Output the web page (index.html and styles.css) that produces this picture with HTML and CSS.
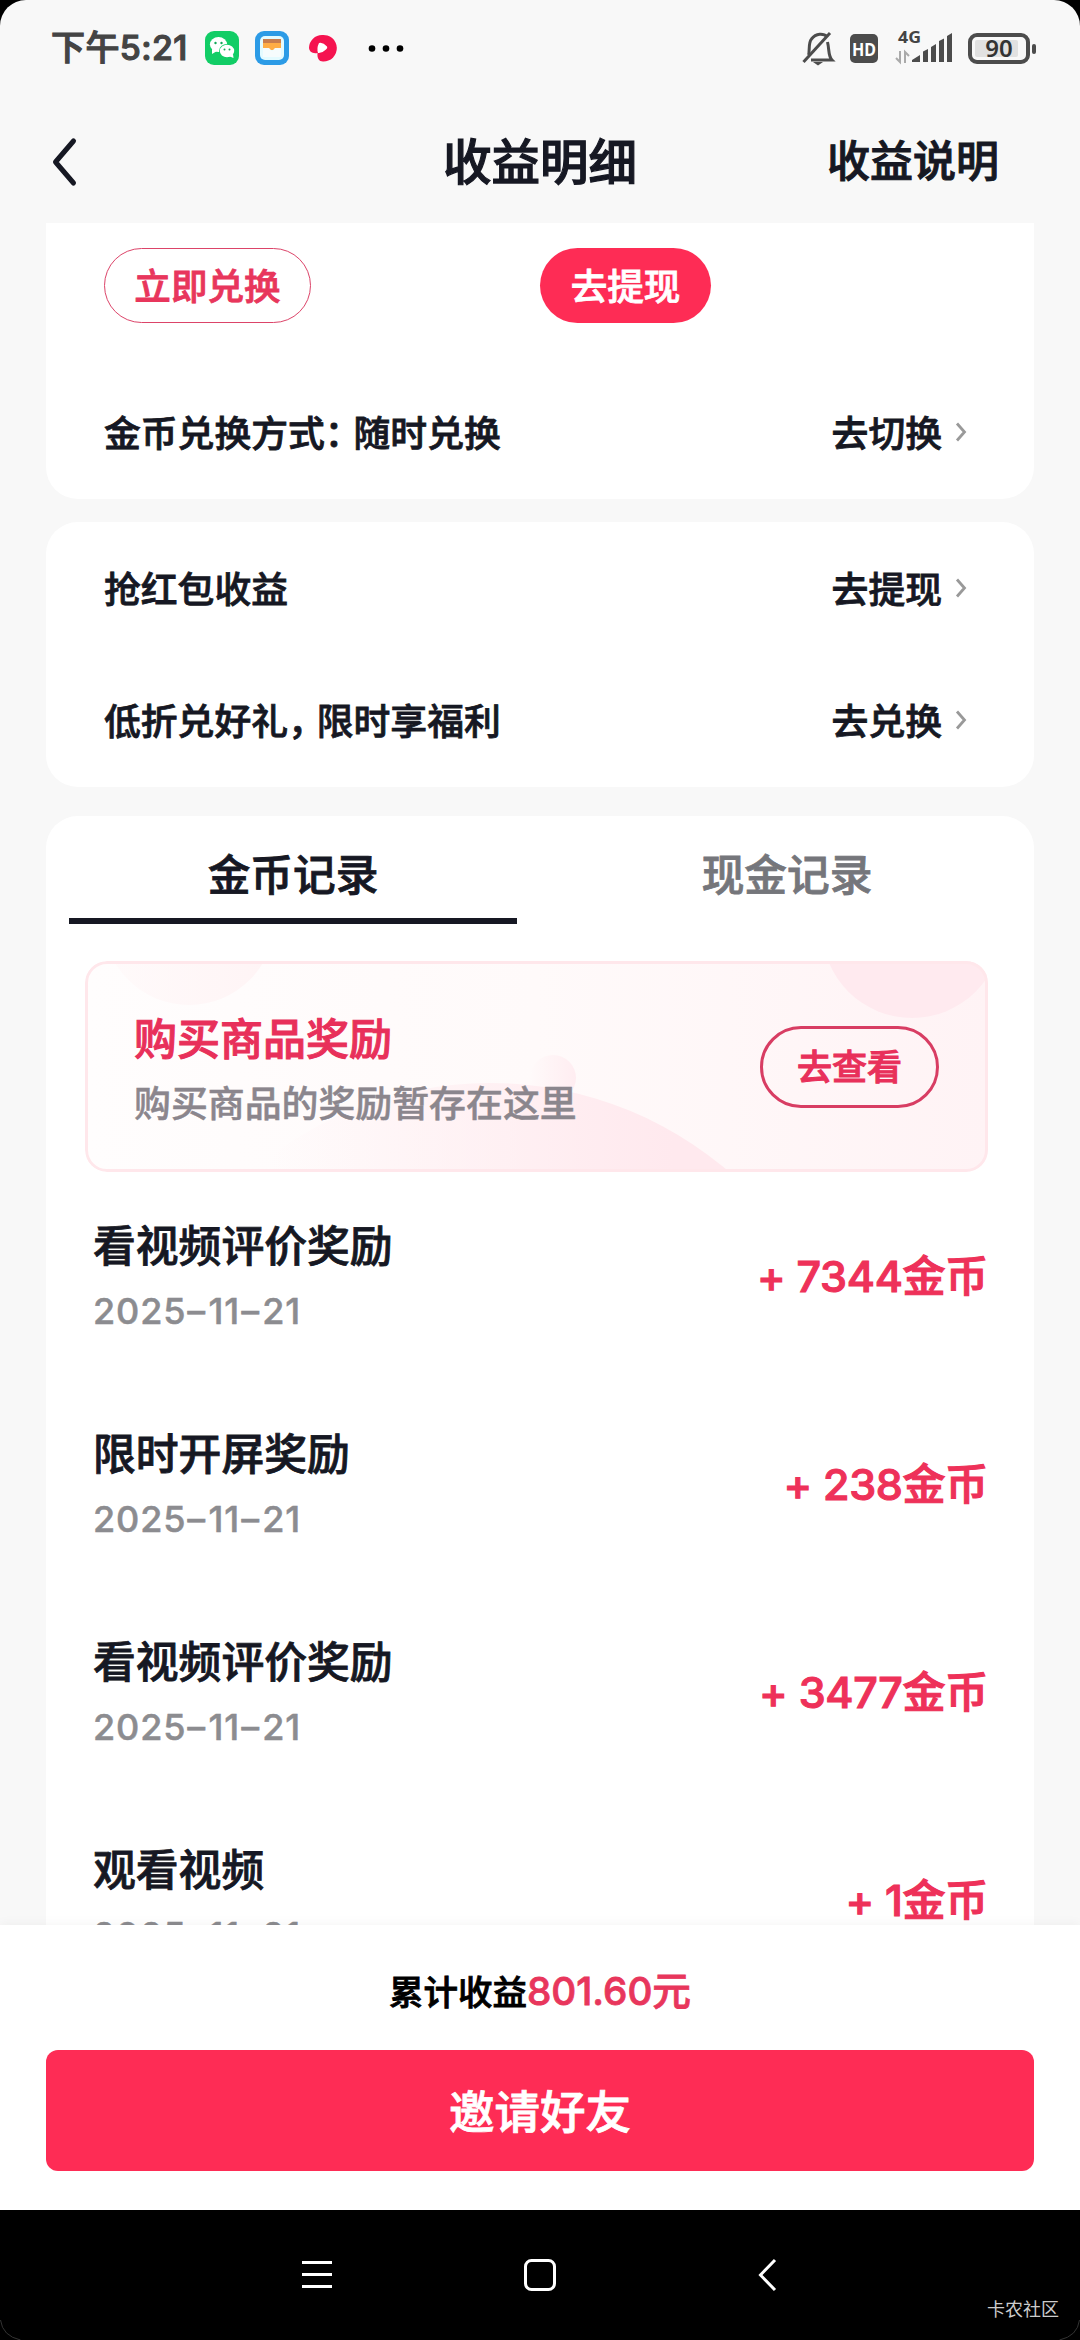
FILE: index.html
```html
<!DOCTYPE html>
<html lang="zh-CN">
<head>
<meta charset="utf-8">
<title>收益明细</title>
<link rel="stylesheet" href="styles.css">
</head>
<body>
<div class="screen">
  <header class="top">
    <div class="status">
      <span class="clock">下午5:21</span>
      <svg class="app-icons" width="216" height="44" viewBox="0 0 216 44">
        <rect x="5" y="5" width="34" height="34" rx="9" fill="#12cd66"/>
        <ellipse cx="18.500" cy="18.500" rx="8.600" ry="7.500" fill="#fff"/>
        <path d="M12 23l0 5 5-3z" fill="#fff"/>
        <ellipse cx="27" cy="25" rx="8" ry="7" fill="#12cd66"/>
        <ellipse cx="27" cy="25" rx="7.200" ry="6.200" fill="#fff"/>
        <path d="M33 28l.5 4-5-2z" fill="#fff"/>
        <g fill="#12a858"><circle cx="15.500" cy="17" r="1.200"/><circle cx="21.500" cy="17" r="1.200"/><circle cx="24.500" cy="23.500" r="1"/><circle cx="29.500" cy="23.500" r="1"/></g>
        <rect x="55" y="5" width="34" height="34" rx="9" fill="#2c9be6"/>
        <rect x="60" y="10" width="24" height="24" rx="5" fill="#e4fbff"/>
        <path d="M63 13h18v5H63z" fill="#c97d4d"/>
        <path d="M63 17h18v7H63z" fill="#ffad45"/>
        <path d="M63 22h6l3 3 3-3h6v9h-18z" fill="#f6fcfd"/>
        <path d="M122 9a13.300 13.300 0 1 1 1 26.500c-4 0-6-3-5.500-8.500-5 1-8.500-1.500-8.500-5.500A13 13 0 0 1 122 9z" fill="#f5134f"/>
        <path d="M119 17q4-1 8 3.500 1 1.500-1 3-4 4-8 3.500-1.500-5 1-10z" fill="#fff"/>
        <circle cx="172" cy="22.500" r="3.300"/><circle cx="186" cy="22.500" r="3.300"/><circle cx="200" cy="22.500" r="3.300"/>
      </svg>
      <svg class="system-icons" width="240" height="44" viewBox="0 0 240 44">
        <g fill="none" stroke="#4c4c4c" stroke-width="3">
          <path d="M7.500 29C9 25 7 17 10.500 13c4.500-6 12-6 16-2"/>
          <path d="M10 34h21C27 30 28.500 24 26.500 16"/>
          <path d="M2.500 36L29 7"/>
        </g>
        <path d="M12 36h10l-5 3.500z" fill="#4c4c4c"/>
        <rect x="49" y="8" width="28" height="29" rx="5" fill="#4c4c4c"/>
        <text x="63" y="29.500" text-anchor="middle" textLength="24" lengthAdjust="spacingAndGlyphs" class="hd">HD</text>
        <text x="97" y="17" class="net" textLength="23" lengthAdjust="spacingAndGlyphs">4G</text>
        <g fill="none" stroke="#aaa" stroke-width="2"><path d="M99 25v11l-4-4M104 37V26l4 4"/></g>
        <path d="M111 36v-2l8-5v7zM122 36V25.500l5-2.500v13zM130 36V21l5-3v18zM138 36V15l5-2.500V36zM146 36V10l5-3v29z" fill="#4c4c4c"/>
        <rect x="169" y="9" width="58" height="27" rx="7" fill="none" stroke="#4c4c4c" stroke-width="4"/>
        <rect x="174" y="14" width="43" height="17" rx="2" fill="#e1e1e1"/>
        <rect x="231" y="18" width="4" height="10" rx="2" fill="#4c4c4c"/>
        <text x="198" y="31" text-anchor="middle" class="battery">90</text>
      </svg>
    </div>
    <nav class="titlebar">
      <svg class="back" width="28" height="52" viewBox="0 0 28 52"><path d="M23.500 5L5.500 26l18 21" fill="none" stroke="#161823" stroke-width="5" stroke-linecap="round" stroke-linejoin="round"/></svg>
      <h1>收益明细</h1>
      <span class="help">收益说明</span>
    </nav>
  </header>

  <main class="content">
    <section class="card card-balance">
      <div class="actions">
        <div class="cell"><span class="pill outline">立即兑换</span></div>
        <div class="cell"><span class="pill solid">去提现</span></div>
      </div>
      <div class="row">
        <span>金币兑换方式<i class="punct">：</i>随时兑换</span>
        <span class="link">去切换<svg width="12" height="20" viewBox="0 0 12 20"><path d="M2 1.500l7.500 8.500L2 18.500"/></svg></span>
      </div>
    </section>

    <section class="card card-links">
      <div class="row">
        <span>抢红包收益</span>
        <span class="link">去提现<svg width="12" height="20" viewBox="0 0 12 20"><path d="M2 1.500l7.500 8.500L2 18.500"/></svg></span>
      </div>
      <div class="row">
        <span>低折兑好礼<i class="punct">，</i>限时享福利</span>
        <span class="link">去兑换<svg width="12" height="20" viewBox="0 0 12 20"><path d="M2 1.500l7.500 8.500L2 18.500"/></svg></span>
      </div>
    </section>

    <section class="card card-records">
      <div class="tabs">
        <div class="tab active">金币记录</div>
        <div class="tab">现金记录</div>
      </div>
      <div class="banner">
        <svg class="banner-art" width="903" height="211" viewBox="0 0 903 211">
          <defs>
            <linearGradient id="hill" x1="0.2" x2="0.75"><stop offset="0" stop-color="#ffe9ee" stop-opacity="0"/><stop offset="1" stop-color="#ffe9ee"/></linearGradient>
            <linearGradient id="dot"><stop offset="0" stop-color="#ffedf1" stop-opacity="0"/><stop offset="1" stop-color="#ffedf1"/></linearGradient>
            <linearGradient id="sun"><stop offset="0" stop-color="#fff5f6" stop-opacity="0.300"/><stop offset="1" stop-color="#fff4f5"/></linearGradient>
          </defs>
          <circle cx="104" cy="-42" r="86" fill="url(#sun)"/>
          <circle cx="827" cy="-33" r="90" fill="#ffeaef"/>
          <circle cx="468" cy="117" r="23" fill="url(#dot)"/>
          <circle cx="405" cy="488" r="366" fill="url(#hill)"/>
        </svg>
        <div class="banner-text">
          <div class="banner-title">购买商品奖励</div>
          <div class="banner-sub">购买商品的奖励暂存在这里</div>
        </div>
        <span class="banner-btn">去查看</span>
      </div>
      <ul class="records">
        <li><div><div class="name">看视频评价奖励</div><div class="date">2025<i>-</i>11<i>-</i>21</div></div><div class="amount">+ 7344金币</div></li>
        <li><div><div class="name">限时开屏奖励</div><div class="date">2025<i>-</i>11<i>-</i>21</div></div><div class="amount">+ 238金币</div></li>
        <li><div><div class="name">看视频评价奖励</div><div class="date">2025<i>-</i>11<i>-</i>21</div></div><div class="amount">+ 3477金币</div></li>
        <li><div><div class="name">观看视频</div><div class="date">2025<i>-</i>11<i>-</i>21</div></div><div class="amount">+ 1金币</div></li>
      </ul>
    </section>
  </main>

  <footer class="footer">
    <div class="total">累计收益<span class="sum">801.60元</span></div>
    <div class="invite">邀请好友</div>
  </footer>

  <div class="sysnav">
    <svg width="1080" height="130" viewBox="0 0 1080 130" fill="none" stroke="#fff" stroke-width="3">
      <path d="M302 52.500h30M302 64.500h30M302 76.500h30"/>
      <rect x="525.500" y="50.500" width="29" height="29" rx="6"/>
      <path d="M775 50L760.500 65 775 80"/>
      <path d="M.5 110q2 16 20 20M1079.500 110q-2 16-20 20" stroke="#333" stroke-width="1"/>
    </svg>
    <span class="mark">卡农社区</span>
  </div>
</div>
</body>
</html>
```
FILE: styles.css
```css
* { box-sizing: border-box; margin: 0; padding: 0; }
body { background: #000; }
.screen {
  width: 1080px;
  height: 2340px;
  overflow: hidden;
  display: flex;
  flex-direction: column;
  background: #f8f8f8;
  border-radius: 26px 26px 0 0;
  font-family: Inter, "Noto Sans CJK SC", sans-serif;
  font-weight: 500;
  -webkit-text-stroke: 0.8px;
  color: #161823;
  white-space: nowrap;
}
i { font-style: normal; }
svg text { -webkit-text-stroke: 0; }
.top { height: 223px; flex: none; }
.status { height: 96px; display: flex; align-items: center; padding-left: 51px; }
.clock { width: 149px; font-size: 34px; line-height: 48px; padding-bottom: 1px; letter-spacing: 0.400px; color: #444; -webkit-text-stroke: 1.200px; }
.system-icons { margin-left: 385px; }
.hd { font: 700 18px "Noto Sans", sans-serif; fill: #fff; }
.net { font: 700 16px "Noto Sans", sans-serif; fill: #444; }
.battery { font: 600 24px "Noto Sans", sans-serif; fill: #333; }
.titlebar {
  height: 127px;
  display: grid;
  grid-template-columns: 1fr auto 1fr;
  align-items: center;
  padding: 0 81px 0 50px;
}
.titlebar h1 { font-size: 48.500px; font-weight: 500; line-height: 72px; margin-left: 31px; margin-top: 6px; -webkit-text-stroke: 1.200px; }
.back { margin-top: 5px; }
.help { justify-self: end; font-size: 43px; line-height: 64px; padding-top: 2px; -webkit-text-stroke: 1px; }
.content { height: 1702px; flex: none; overflow: hidden; padding: 0 46px; }
.card { background: #fff; border-radius: 32px; }
.card-balance { height: 276px; border-radius: 0 0 32px 32px; padding: 25px 0 0; margin-bottom: 23px; }
.actions { display: grid; grid-template-columns: 436px 1fr; padding-left: 58px; height: 118px; }
.pill {
  display: inline-flex;
  align-items: center;
  justify-content: center;
  height: 75px;
  padding-bottom: 3px;
  border-radius: 38px;
  font-size: 36.600px;
}
.outline { width: 207px; border: 1.500px solid #dc4469; color: #e8365c; }
.solid { width: 171px; background: #fe2c55; color: #fff; }
.row {
  height: 132px;
  display: flex;
  align-items: center;
  justify-content: space-between;
  padding: 0 67px 2px 58px;
  font-size: 36.800px;
}
.link { display: flex; align-items: center; gap: 13px; }
.link svg { fill: none; stroke: #999; stroke-width: 2.800; margin-top: 2px; }
.punct { font-feature-settings: "halt"; letter-spacing: 10.400px; }
.card-links { height: 265px; margin-bottom: 29px; }
.card-records { height: 1200px; border-radius: 32px 32px 0 0; }
.tabs { display: grid; grid-template-columns: 1fr 1fr; height: 108px; }
.tab {
  margin: 0 23px;
  border-bottom: 6px solid transparent;
  text-align: center;
  font-size: 42.700px;
  line-height: 119px;
  height: 108px;
  color: #75767b;
}
.tab.active { color: #161823; border-color: #161823; }
.banner {
  position: relative;
  overflow: hidden;
  display: flex;
  align-items: center;
  justify-content: space-between;
  width: 903px;
  height: 211px;
  margin: 37px 0 0 39px;
  padding: 0 49px;
  border-radius: 22px;
  background: linear-gradient(90deg, #fffdfd, #fffafa 50%, #fff3f5);
}
.banner::after {
  content: "";
  position: absolute;
  inset: 0;
  border: 3px solid #ffe7eb;
  border-radius: 22px;
}
.banner-art { position: absolute; left: 0; top: 0; }
.banner-text, .banner-btn { position: relative; }
.banner-text { padding-top: 9px; }
.banner-title { font-size: 43px; line-height: 64px; color: #e8305a; -webkit-text-stroke: 1px; }
.banner-sub { font-size: 36.900px; line-height: 65px; color: #8b868d; -webkit-text-stroke: 0.500px; }
.banner-btn {
  width: 179px;
  height: 82px;
  border: 3px solid #d83d63;
  border-radius: 41px;
  font-size: 35px;
  line-height: 77px;
  text-align: center;
  color: #e8305a;
  -webkit-text-stroke: 1px;
}
.records { list-style: none; }
.records li { height: 208px; display: flex; align-items: center; justify-content: space-between; padding: 5px 46px 0 47px; }
.name { font-size: 42.800px; line-height: 64px; }
.date { font-size: 36px; line-height: 64px; letter-spacing: 0.900px; color: #8c8c90; -webkit-text-stroke: 0.500px; }
.date i { display: inline-block; width: 22px; text-align: center; transform: scaleX(1.5); }
.amount { font-size: 43px; line-height: 64px; padding-bottom: 6px; letter-spacing: -0.300px; color: #ee3159; -webkit-text-stroke: 1.100px; }
.footer {
  position: relative;
  height: 285px;
  flex: none;
  padding: 0 46px;
  background: #fff;
  box-shadow: 0 -2px 10px rgba(0, 0, 0, 0.040);
}
.total { height: 125px; line-height: 132px; text-align: center; font-size: 34.500px; color: #000; }
.sum { font-size: 38.700px; color: #e8365c; }
.invite {
  height: 121px;
  border-radius: 12px;
  background: #fe2c55;
  color: #fff;
  text-align: center;
  font-size: 45.500px;
  line-height: 126px;
}
.sysnav { position: relative; height: 130px; flex: none; background: #000; }
.sysnav svg { display: block; }
.mark { position: absolute; right: 21px; bottom: 16px; font-size: 18px; line-height: 28px; font-weight: 400; color: #ccc; -webkit-text-stroke: 0; }
```
